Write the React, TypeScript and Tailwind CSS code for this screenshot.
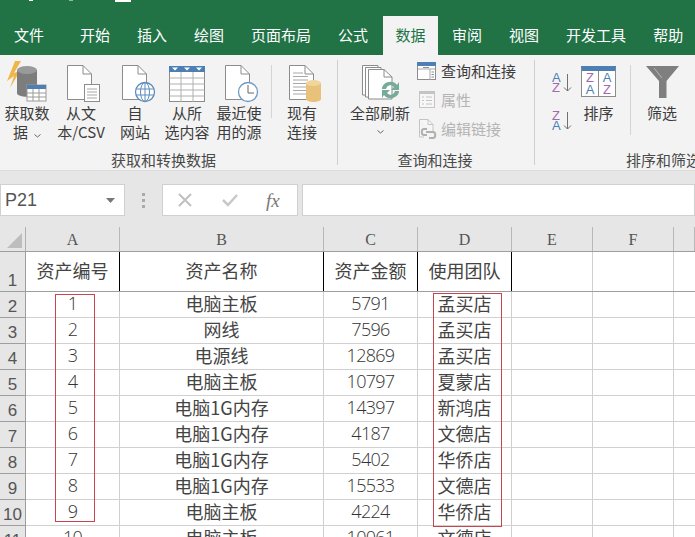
import React from "react";

const cjk = "font-['Noto_Sans_CJK_SC',sans-serif]";

function Doc({ x = 0, y = 0 }: { x?: number; y?: number }) {
  return (
    <g transform={`translate(${x} ${y})`}>
      <path d="M.5.5H16L24.5 9V34.5H.5Z" fill="#fff" stroke="#8c8c8c" />
      <path d="M16 .5V9H24.5" fill="none" stroke="#8c8c8c" />
    </g>
  );
}

const IconGetData = () => (
  <svg width="42" height="42" viewBox="0 0 42 42">
    <path d="M9 0 1 20 8 15 4 27 14 10 8 12 15 0Z" fill="#f0b64a" />
    <path d="M11 9V32C11 37 31 37 31 32V9Z" fill="#7d7d7d" />
    <ellipse cx="21" cy="9" rx="10" ry="4" fill="#9a9a9a" />
    <rect x="21" y="24" width="19" height="16" fill="#fff" stroke="#9a9a9a" />
    <rect x="21" y="24" width="19" height="4" fill="#4d7fb5" />
    <path d="M21 32H40M21 36H40M27 28V40M33 28V40" stroke="#9a9a9a" fill="none" />
  </svg>
);
const IconCsv = () => (
  <svg width="36" height="38" viewBox="0 0 36 38">
    <Doc x={1} y={0} />
    <rect x="18.5" y="19.5" width="15" height="17" fill="#fff" stroke="#8c8c8c" />
    <path d="M21 24H31M21 27H31M21 30H31M21 33H31" stroke="#a8a8a8" />
  </svg>
);
const IconWeb = () => (
  <svg width="36" height="38" viewBox="0 0 36 38">
    <Doc x={1} y={0} />
    <circle cx="24" cy="27" r="9.5" fill="#fff" stroke="#5e8cbd" strokeWidth="1.3" />
    <ellipse cx="24" cy="27" rx="4.5" ry="9.5" fill="none" stroke="#5e8cbd" />
    <path d="M15 24H33M15 30H33M24 17.5V36.5" stroke="#5e8cbd" />
  </svg>
);
const IconTable = () => (
  <svg width="37" height="37" viewBox="0 0 37 37">
    <rect x=".5" y=".5" width="35" height="35" fill="#fff" stroke="#8c8c8c" />
    <rect y="0" width="36" height="6" fill="#4d7fb5" />
    <path d="M3 1.5H9L6 4.5ZM15 1.5H21L18 4.5ZM27 1.5H33L30 4.5Z" fill="#fff" />
    <path d="M.5 12H35.5M.5 18H35.5M.5 24H35.5M.5 30H35.5M12 6V36M24 6V36" stroke="#b0b0b0" fill="none" />
  </svg>
);
const IconRecent = () => (
  <svg width="36" height="38" viewBox="0 0 36 38">
    <Doc x={1} y={0} />
    <circle cx="24" cy="27" r="9.5" fill="#fff" stroke="#6f9ac6" strokeWidth="1.3" />
    <path d="M24 20V28H30" fill="none" stroke="#666" />
  </svg>
);
const IconExisting = () => (
  <svg width="36" height="38" viewBox="0 0 36 38">
    <Doc x={1} y={0} />
    <path d="M5 8H15M5 11.500H20M5 15H20M5 18.500H18M5 22H18M5 25.500H18M5 29H18" stroke="#a8a8a8" />
    <path d="M18 18V34C18 38 33 38 33 34V18Z" fill="#e8c27a" />
    <ellipse cx="25.500" cy="18" rx="7.500" ry="3" fill="#f0d59c" />
  </svg>
);
const IconRefresh = () => (
  <svg width="38" height="38" viewBox="0 0 38 38">
    <path d="M.5.5H16V30H.5Z" fill="#fff" stroke="#8c8c8c" />
    <path d="M3.500 2.500H19V32H3.500Z" fill="#fff" stroke="#8c8c8c" />
    <path d="M6.500 4.500H22L30 12V34H6.500Z" fill="#fff" stroke="#8c8c8c" />
    <path d="M22 4.500V12H30" fill="none" stroke="#8c8c8c" />
    <path d="M20 24C20 17 31 14 35 20L37 17V25H29L32 22C29 19 25 20 24 24Z" fill="#75ab98" />
    <path d="M37 26C37 33 26 36 22 30L20 33V25H28L25 28C28 31 32 30 33 26Z" fill="#75ab98" />
  </svg>
);
const IconQuery = () => (
  <svg width="20" height="19" viewBox="0 0 20 19">
    <rect x=".5" y=".5" width="18" height="17" fill="#fff" stroke="#8c8c8c" />
    <rect width="19" height="4" fill="#4d7fb5" />
    <path d="M1 7H18M13 7V18" stroke="#a8a8a8" />
    <path d="M14.500 10H17M14.500 12.500H17M14.500 15H17M6 5.500H12" stroke="#8c8c8c" />
  </svg>
);
const IconProps = () => (
  <svg width="18" height="18" viewBox="0 0 18 18">
    <rect x=".5" y=".5" width="15" height="16" fill="#f7f7f7" stroke="#c4c4c4" />
    <rect width="16" height="3" fill="#c4c4c4" />
    <path d="M3 6H5M7 6H13M3 9.500H5M7 9.500H13M3 13H5M7 13H13" stroke="#c4c4c4" />
  </svg>
);
const IconLinks = () => (
  <svg width="19" height="20" viewBox="0 0 19 20">
    <path d="M.5.5H9L14 5.500V12M.5.5V18H5" fill="#f7f7f7" stroke="#c4c4c4" />
    <path d="M9 .5V5.500H14" fill="none" stroke="#c4c4c4" />
    <path d="M8 10H5C2 10 2 16 5 16H8M10 13H14C17 13 17 19 14 19H10M7 13H11" fill="none" stroke="#b0b0b0" strokeWidth="2" />
  </svg>
);
const AZ = ({ flip }: { flip?: boolean }) => (
  <div className="flex h-[20px] w-[20px] items-start gap-[1px]">
    <div className="flex w-[10px] flex-col items-start font-['Liberation_Sans',sans-serif] text-[13px] leading-[10px]">
      <span className={flip ? "text-[#a466ae]" : "text-[#4d7fb5]"}>{flip ? "Z" : "A"}</span>
      <span className={flip ? "text-[#4d7fb5]" : "text-[#a466ae]"}>{flip ? "A" : "Z"}</span>
    </div>
    <svg className="mt-[1px]" width="9" height="19" viewBox="0 0 9 19">
      <path d="M4.500 0V17M1 13.500 4.500 17 8 13.500" fill="none" stroke="#707070" />
    </svg>
  </div>
);
const IconSort = () => (
  <div className="flex h-[31px] w-[35px] border border-[#8c8c8c] border-t-[5px] border-t-[#4d7fb5] bg-white font-['Liberation_Sans',sans-serif] text-[13px] leading-[12px]">
    <div className="flex flex-1 flex-col items-center justify-center border-r border-[#8c8c8c]">
      <span className="text-[#a466ae]">Z</span>
      <span className="text-[#4d7fb5]">A</span>
    </div>
    <div className="flex flex-1 flex-col items-center justify-center">
      <span className="text-[#4d7fb5]">A</span>
      <span className="text-[#a466ae]">Z</span>
    </div>
  </div>
);
const IconFilter = () => (
  <svg width="33" height="33" viewBox="0 0 33 33">
    <path d="M0 0H33L20.500 15V32H13V15Z" fill="#7f7f7f" />
    <path d="M8 2 16 12" stroke="#b5b5b5" />
  </svg>
);
const Chevron = () => (
  <svg className="inline-block" width="7" height="4" viewBox="0 0 7 4">
    <path d="M.5.5 3.500 3 6.500.5" fill="none" stroke="#666" />
  </svg>
);

function Btn({ w, icon, l1, l2, chev, shift = "" }: { w: string; icon: React.ReactNode; l1: string; l2: string; chev?: boolean; shift?: string }) {
  return (
    <div className={`flex shrink-0 flex-col items-center ${w}`}>
      <div className={`flex h-[43px] items-end justify-center ${shift}`}>{icon}</div>
      <div className="whitespace-nowrap text-center text-[15px] leading-[19px] text-[#3c3c3c]">
        <div>{l1}</div>
        <div>
          {l2}
          {chev && <span className="ml-[6px] align-middle"><Chevron /></span>}
        </div>
      </div>
    </div>
  );
}

const Sep = () => <div className="mx-[5px] mt-[5px] h-[53px] w-px shrink-0 bg-[#d4d4d4]" />;
const GroupLabel = ({ t, c = "" }: { t: string; c?: string }) => (
  <div className={`h-[20px] whitespace-nowrap text-center text-[15px] leading-[20px] text-[#4a4a4a] ${c}`}>{t}</div>
);

const tabs = ["开始", "插入", "绘图", "页面布局", "公式"];
const tabs2 = ["审阅", "视图", "开发工具", "帮助"];

const data: [string, string, string, string][] = [
  ["1", "电脑主板", "5791", "孟买店"],
  ["2", "网线", "7596", "孟买店"],
  ["3", "电源线", "12869", "孟买店"],
  ["4", "电脑主板", "10797", "夏蒙店"],
  ["5", "电脑1G内存", "14397", "新鸿店"],
  ["6", "电脑1G内存", "4187", "文德店"],
  ["7", "电脑1G内存", "5402", "华侨店"],
  ["8", "电脑1G内存", "15533", "文德店"],
  ["9", "电脑主板", "4224", "华侨店"],
  ["10", "电脑主板", "10061", "文德店"],
];
const grid = "grid grid-cols-[26px_94px_204px_94px_94px_81px_81px_21px]";
const serif = "font-['Liberation_Serif',serif]";
const sans = "font-['Liberation_Sans',sans-serif]";
const digits = "font-['Open_Sans',sans-serif] font-light tracking-[-0.7px] text-[#333]";

export default function App() {
  return (
    <div className={`h-[537px] w-[695px] overflow-hidden bg-white ${cjk}`}>
      <div className="h-[55px] bg-[#217346]">
        <div className="flex h-[16px] items-start">
          <div className="ml-[29px] h-[1px] w-[4px] bg-white" />
          <div className="ml-[36px] h-[1px] w-[4px] bg-white/50" />
          <div className="ml-[42px] h-[2px] w-[16px] bg-white" />
        </div>
        <div className="flex h-[39px] items-start text-[15px] text-white">
          <div className="ml-[14px] w-[66px] pt-[9px] leading-[20px]">文件</div>
          <div className="flex gap-[27px] pt-[9px] leading-[20px]">
            {tabs.map((t) => (
              <div key={t}>{t}</div>
            ))}
          </div>
          <div className="ml-[15px] h-[39px] w-[55px] bg-[#f3f3f3] pt-[9px] text-center leading-[20px] text-[#217346]">数据</div>
          <div className="ml-[14px] flex gap-[27px] pt-[9px] leading-[20px]">
            {tabs2.map((t) => (
              <div key={t}>{t}</div>
            ))}
          </div>
        </div>
      </div>

      <div className="flex h-[116px] overflow-hidden border-b border-[#dcdcdc] bg-[#f3f3f3] pt-[5px]">
        <div className="flex h-[105px] w-[338px] shrink-0 flex-col border-r border-[#cfcfcf]">
          <div className="flex h-[87px] shrink-0">
            <Btn w="w-[54px]" icon={<IconGetData />} l1="获取数" l2="据" chev />
            <Btn w="w-[54px]" shift="ml-[6px]" icon={<IconCsv />} l1="从文" l2="本/CSV" />
            <Btn w="w-[54px]" shift="ml-[8px]" icon={<IconWeb />} l1="自" l2="网站" />
            <Btn w="w-[50px]" icon={<IconTable />} l1="从所" l2="选内容" />
            <Btn w="w-[54px]" shift="ml-[6px]" icon={<IconRecent />} l1="最近使" l2="用的源" />
            <Sep />
            <Btn w="w-[50px]" shift="ml-[8px]" icon={<IconExisting />} l1="现有" l2="连接" />
          </div>
          <GroupLabel t="获取和转换数据" c="mt-[3px] shrink-0 pr-[10px]" />
        </div>

        <div className="flex h-[105px] w-[197px] shrink-0 flex-col border-r border-[#cfcfcf]">
          <div className="flex h-[87px] shrink-0">
            <div className="flex w-[84px] shrink-0 flex-col items-center">
              <div className="flex h-[43px] items-end pl-[2px]"><IconRefresh /></div>
              <div className="text-[15px] leading-[19px] text-[#3c3c3c]">全部刷新</div>
              <div className="leading-[15px]"><Chevron /></div>
            </div>
            <div className="-ml-[5px] -mt-[1px] flex flex-col gap-[5px] text-[15px] leading-[24px]">
              <div className="flex items-center gap-[4px] text-[#3c3c3c]"><IconQuery />查询和连接</div>
              <div className="ml-[2px] flex items-center gap-[4px] text-[#b4b4b4]"><IconProps />属性</div>
              <div className="ml-[2px] flex items-center gap-[3px] text-[#b4b4b4]"><IconLinks />编辑链接</div>
            </div>
          </div>
          <GroupLabel t="查询和连接" c="mt-[3px] shrink-0 pr-[2px]" />
        </div>

        <div className="flex flex-1 flex-col overflow-hidden">
          <div className="flex h-[87px] shrink-0">
            <div className="ml-[17px] flex w-[20px] flex-col gap-[18px] pt-[13px]">
              <AZ />
              <AZ flip />
            </div>
            <div className="ml-[4px] flex w-[45px] flex-col items-center pt-[6px]">
              <IconSort />
              <div className="mt-[6px] text-[15px] leading-[19px] text-[#3c3c3c]">排序</div>
            </div>
            <div className="ml-[9px] mt-[5px] h-[70px] w-px bg-[#d4d4d4]" />
            <div className="ml-[13px] flex w-[36px] flex-col items-center pt-[6px]">
              <IconFilter />
              <div className="mt-[4px] whitespace-nowrap text-[15px] leading-[19px] text-[#3c3c3c]">筛选</div>
            </div>
          </div>
          <div className="ml-[91px] mt-[3px] h-[20px] shrink-0 whitespace-nowrap text-[15px] leading-[20px] text-[#4a4a4a]">排序和筛选</div>
        </div>
      </div>

      <div className="flex h-[56px] items-start gap-[4px] bg-[#e6e6e6] pt-[13px]">
        <div className={`flex h-[32px] w-[125px] shrink-0 items-center justify-between border border-[#d0d0d0] bg-white pl-[4px] pr-[9px] text-[18px] text-[#555] ${sans}`}>
          P21
          <svg width="9" height="5" viewBox="0 0 9 5"><path d="M0 0H9L4.500 5Z" fill="#777" /></svg>
        </div>
        <div className="flex w-[29px] shrink-0 flex-col items-center gap-[3px] pt-[9px]">
          <div className="size-[3px] bg-[#aaa]" />
          <div className="size-[3px] bg-[#aaa]" />
          <div className="size-[3px] bg-[#aaa]" />
        </div>
        <div className="flex h-[32px] w-[136px] shrink-0 items-center border border-[#d0d0d0] bg-white">
          <svg className="ml-[14px]" width="16" height="16" viewBox="0 0 16 16"><path d="M2 2 14 14M14 2 2 14" stroke="#c0c0c0" strokeWidth="2" /></svg>
          <svg className="ml-[28px]" width="18" height="16" viewBox="0 0 18 16"><path d="M2 8 7 13 16 3" fill="none" stroke="#c8c8c8" strokeWidth="2.500" /></svg>
          <span className={`ml-[27px] text-[19px] italic leading-none text-[#777] ${serif}`}>fx</span>
        </div>
        <div className="h-[32px] flex-1 border border-[#d0d0d0] bg-white" />
      </div>

      <div className="relative">
        <div className={`${grid} h-[24px] bg-[#e6e6e6] text-[16px] text-[#555] ${serif}`}>
          <div className="relative overflow-hidden border-r border-[#b0b0b0]">
            <div className="absolute bottom-[3px] right-[3px] size-0 border-b-[15px] border-l-[15px] border-b-[#bdbdbd] border-l-transparent" />
          </div>
          {["A", "B", "C", "D", "E", "F", ""].map((c, i) => (
            <div key={i} className="flex items-end justify-center border-r border-[#b8b8b8] pb-[1px] leading-[20px]">{c}</div>
          ))}
        </div>
        <div className={`${grid} h-[41px] border-y border-[#9e9e9e] text-[18px] text-[#444]`}>
          <div className={`flex items-end justify-center border-r border-[#9e9e9e] bg-[#e6e6e6] text-[17px] leading-[20px] text-[#555] ${sans}`}>1</div>
          {["资产编号", "资产名称", "资产金额", "使用团队"].map((h) => (
            <div key={h} className="flex items-center justify-center border-r border-black pb-[2px]">{h}</div>
          ))}
          <div className="border-r border-[#d0d0d0]" />
          <div className="border-r border-[#d0d0d0]" />
          <div />
        </div>
        {data.map((r, i) => (
          <div key={i} className={`${grid} h-[26px] text-[18px] leading-[22px] text-[#444]`}>
            <div className={`flex items-end justify-center border-r border-b border-[#9e9e9e] bg-[#e6e6e6] text-[17px] leading-[20px] text-[#555] ${sans}`}>{i + 2}</div>
            {r.map((c, j) => (
              <div key={j} className={`border-r border-b border-[#d0d0d0] text-center ${j === 0 || j === 2 ? digits : ""}`}>{c}</div>
            ))}
            <div className="border-r border-b border-[#d0d0d0]" />
            <div className="border-r border-b border-[#d0d0d0]" />
            <div className="border-b border-[#d0d0d0]" />
          </div>
        ))}
        <div className="absolute left-[55px] top-[67px] h-[228px] w-[40px] border border-[#c9444f]" />
        <div className="absolute left-[433px] top-[66px] h-[234px] w-[69px] border border-[#c9444f]" />
      </div>
    </div>
  );
}
